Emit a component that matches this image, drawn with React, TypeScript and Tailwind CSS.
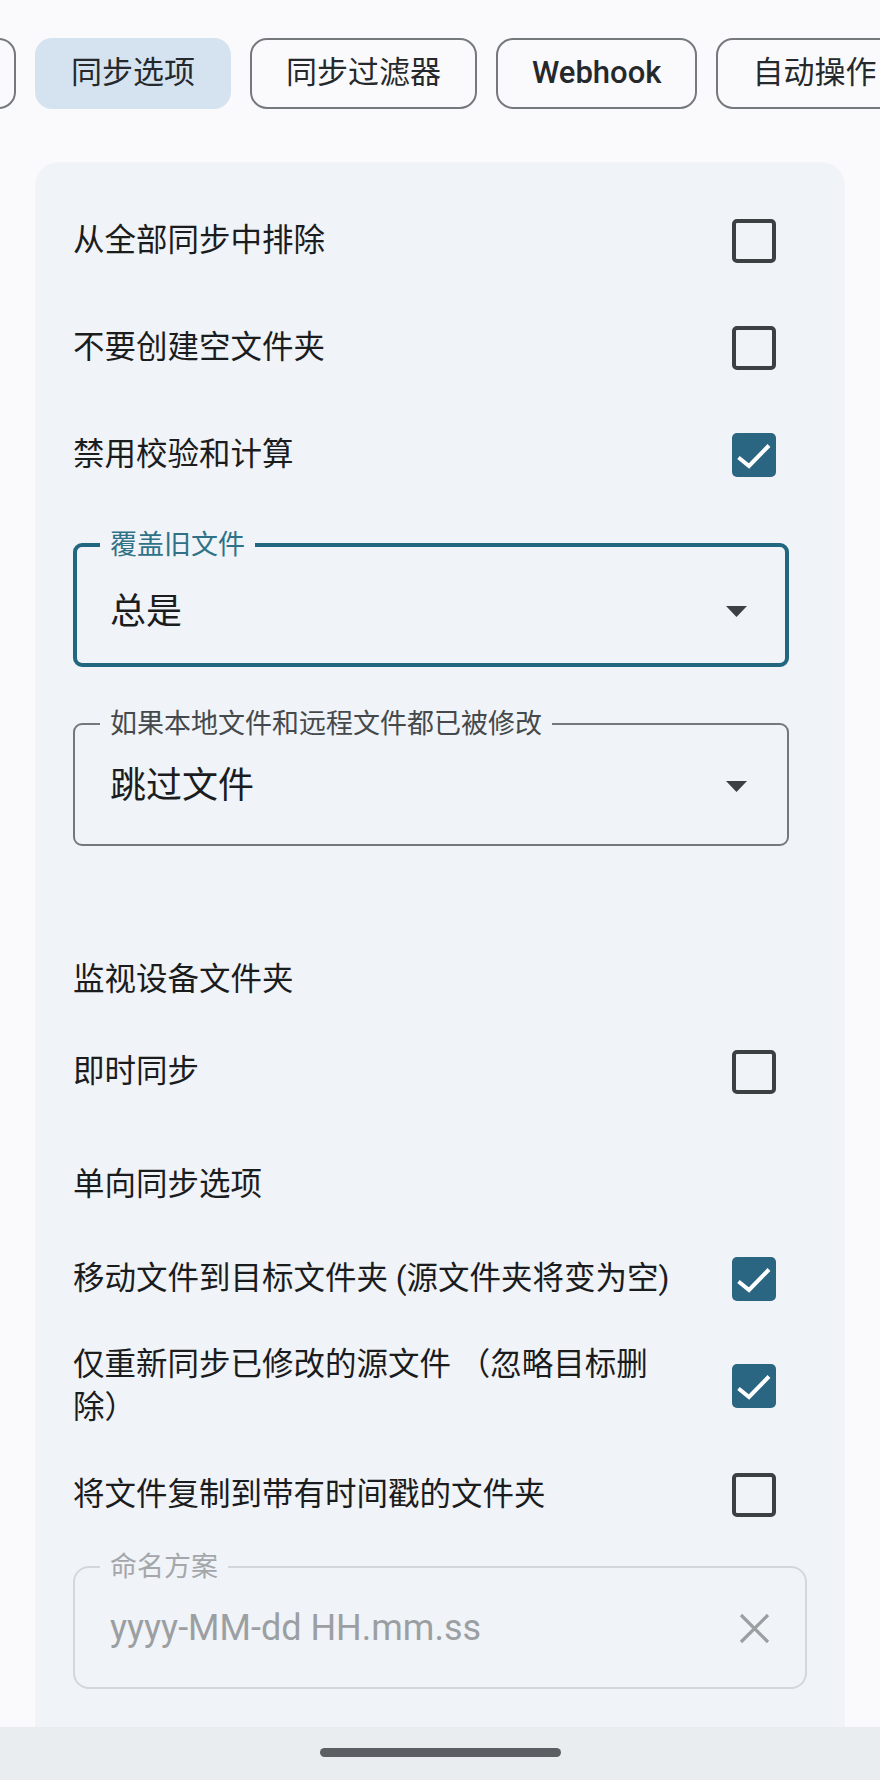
import React from "react"

const tabs = [
  { label: "计划" },
  { label: "同步选项", active: true },
  { label: "同步过滤器" },
  { label: "Webhook", latin: true },
  { label: "自动操作" },
]

function Checkbox({ on }: { on?: boolean }) {
  return (
    <div className="w-[106px] h-[106px] shrink-0 flex items-center justify-center">
      {on ? (
        <div className="w-[44px] h-[44px] rounded-[5px] bg-[#2a6581]">
          <svg viewBox="0 0 44 44" className="w-[44px] h-[44px]">
            <path d="M6.5 24.5 L17 33 L37 12.5" stroke="#ffffff" strokeWidth="4" fill="none" />
          </svg>
        </div>
      ) : (
        <div className="w-[44px] h-[44px] rounded-[5px] border-[4px] border-[#3c4043]" />
      )}
    </div>
  )
}

function Row({ text, on, className }: { text: string; on?: boolean; className?: string }) {
  return (
    <div className={"flex items-center gap-[12px] min-h-[107px] " + (className ?? "")}>
      <div className="flex-1 text-[31.5px] leading-[43px] text-[#1b1c1e]">{text}</div>
      <Checkbox on={on} />
    </div>
  )
}

function Caret() {
  return (
    <svg viewBox="0 0 21 11" className="w-[21px] h-[11px] shrink-0">
      <polygon points="0,0 21,0 10.5,11" fill="#3c4043" />
    </svg>
  )
}

export default function App() {
  return (
    <div className="h-[1780px] overflow-hidden bg-[#fafafd] font-['Roboto','Noto_Sans_CJK_SC',sans-serif]">
      {/* tab strip, scrolled a little to the right */}
      <div className="pt-[38px] overflow-hidden">
        <div className="flex gap-[19px] ml-[-118px]">
          {tabs.map((t) => (
            <div
              key={t.label}
              className={
                (t.active
                  ? "shrink-0 h-[71px] px-[34px] flex items-center whitespace-nowrap rounded-[17px] border-2 border-transparent bg-[#d5e3f1] text-[31px] text-[#26292c]"
                  : "shrink-0 h-[71px] px-[34px] flex items-center whitespace-nowrap rounded-[17px] border-2 border-[#76797c] text-[31px] text-[#26292c]") +
                (t.latin ? " font-medium" : " font-normal")
              }
            >
              {t.label}
            </div>
          ))}
        </div>
      </div>

      <div className="mt-[53px] mx-[35px] w-[810px] rounded-[24px] bg-[#f0f3f7] pt-[25px] px-[38px] pb-[60px]">
        <Row text="从全部同步中排除" />
        <Row text="不要创建空文件夹" />
        <Row text="禁用校验和计算" on />

        <fieldset className="mt-[22px] mr-[18px] rounded-[9px] border-[4px] border-[#20677f]">
          <legend className="ml-[23px] px-[10px] text-[27px] leading-[30px] text-[#2f7288]">覆盖旧文件</legend>
          <div className="h-[103px] flex items-center pl-[33px] pr-[38px]">
            <span className="flex-1 text-[36px] text-[#1b1c1e]">总是</span>
            <Caret />
          </div>
        </fieldset>

        <fieldset className="mt-[42px] mr-[18px] rounded-[9px] border-2 border-[#74777b]">
          <legend className="ml-[25px] px-[10px] text-[27px] leading-[30px] text-[#46494c]">如果本地文件和远程文件都已被修改</legend>
          <div className="h-[105px] pb-[11px] flex items-center pl-[35px] pr-[40px]">
            <span className="flex-1 text-[36px] text-[#1b1c1e]">跳过文件</span>
            <Caret />
          </div>
        </fieldset>

        <div className="mt-[111px] text-[31.5px] leading-[45px] text-[#1b1c1e]">监视设备文件夹</div>
        <Row text="即时同步" className="mt-[16px]" />

        <div className="mt-[37px] text-[31.5px] leading-[45px] text-[#1b1c1e]">单向同步选项</div>
        <Row text="移动文件到目标文件夹 (源文件夹将变为空)" on className="mt-[18px]" />
        <Row text="仅重新同步已修改的源文件 （忽略目标删除）" on />
        <Row text="将文件复制到带有时间戳的文件夹" className="mt-[2px]" />

        <fieldset className="mt-[4px] rounded-[16px] border-2 border-[#d4d7da]">
          <legend className="ml-[25px] px-[10px] text-[27px] leading-[30px] text-[#a4a7aa]">命名方案</legend>
          <div className="h-[105px] pb-[13px] flex items-center pl-[35px] pr-[34px]">
            <span className="flex-1 text-[36px] text-[#9c9fa2]">yyyy-MM-dd HH.mm.ss</span>
            <svg viewBox="0 0 33 33" className="w-[33px] h-[33px] shrink-0">
              <path d="M3 3 L30 30 M30 3 L3 30" stroke="#9c9fa2" strokeWidth="3.2" fill="none" />
            </svg>
          </div>
        </fieldset>
      </div>

      {/* system gesture bar */}
      <div className="fixed inset-x-0 bottom-0 h-[53px] bg-[#e9edf0] flex justify-center pt-[21px]">
        <div className="w-[241px] h-[9px] rounded-full bg-[#5b5f63]" />
      </div>
    </div>
  )
}
